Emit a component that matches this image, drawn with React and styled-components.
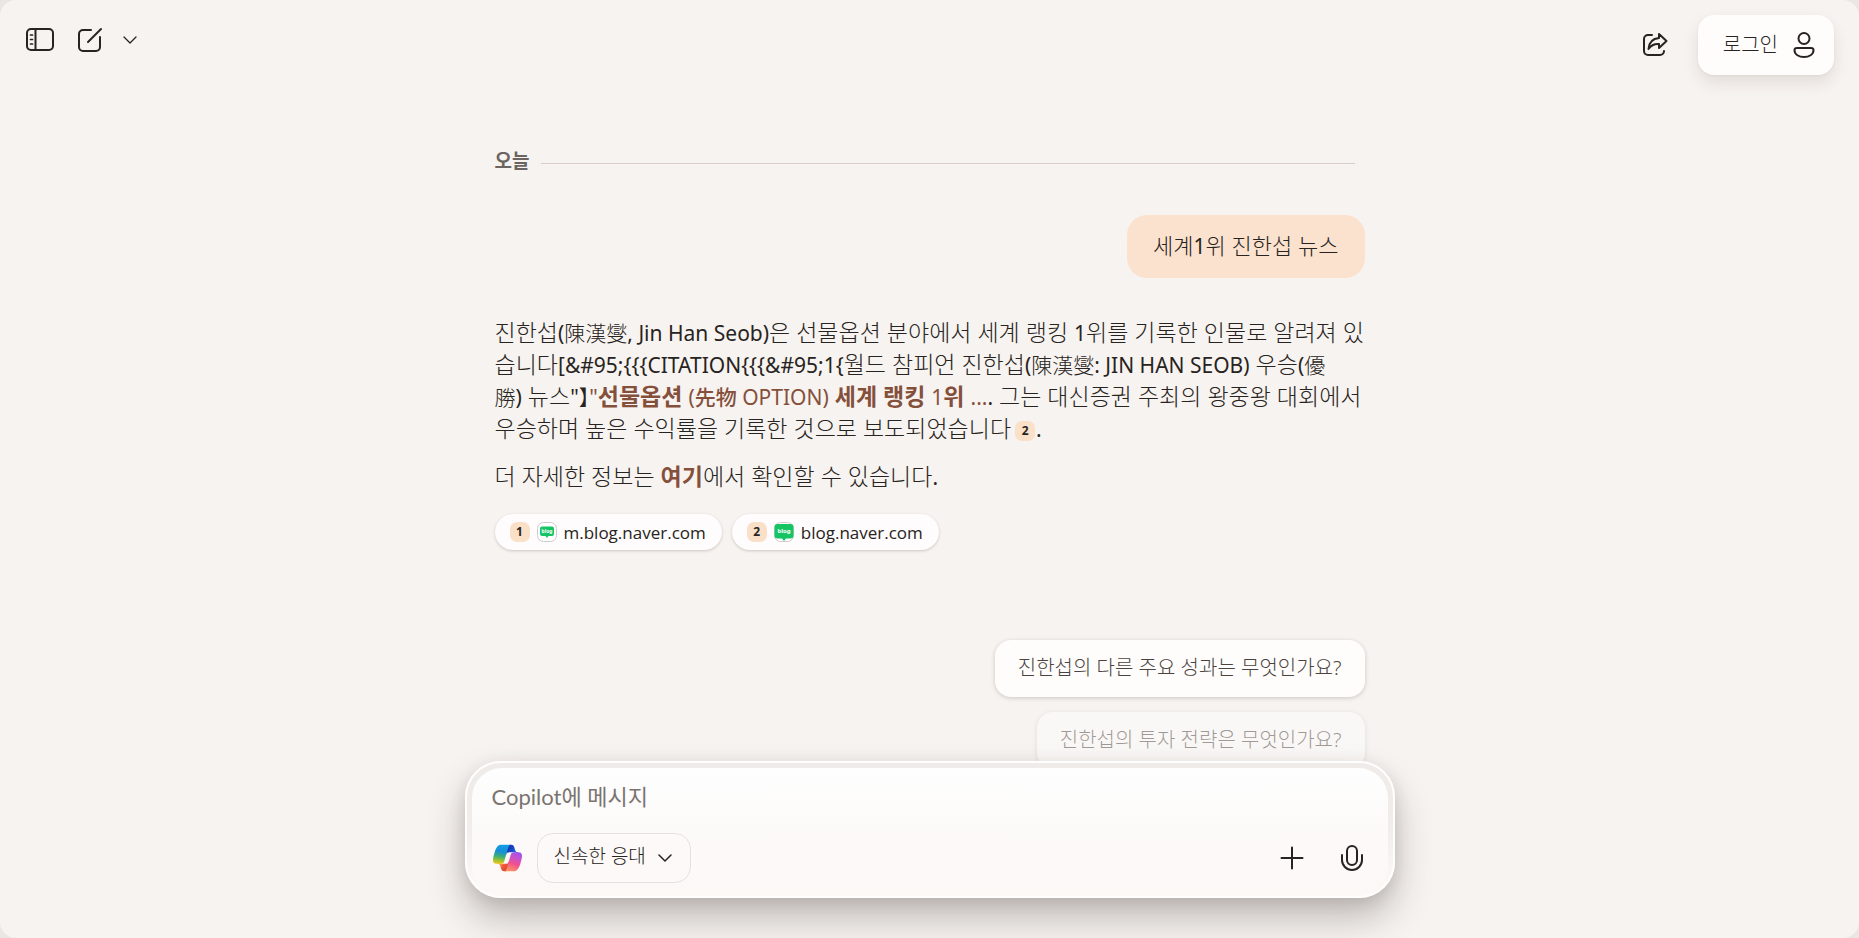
import React from "react";
import styled, { createGlobalStyle } from "styled-components";

const GlobalStyle = createGlobalStyle`
  * { box-sizing: border-box; }
  html { background: #e9e6e4; }
  body {
    margin: 0;
    font-family: "Noto Sans", "Noto Sans CJK KR", sans-serif;
    color: #272320;
  }
  button, input, select { font: inherit; color: inherit; }
`;

const Page = styled.div`
  display: flex;
  flex-direction: column;
  height: 100vh;
  overflow: hidden;
  border-radius: 16px;
  background: #f7f3f0;
`;

const Header = styled.header`
  display: flex;
  justify-content: space-between;
  align-items: flex-start;
  padding: 15px 25px 0 23px;
  height: 90px;
  flex: none;
`;

const Tools = styled.div`
  display: flex;
  align-items: center;
  gap: ${(p) => p.$gap}px;
  height: ${(p) => p.$height}px;
`;

const IconButton = styled.button`
  display: flex;
  align-items: center;
  justify-content: center;
  width: ${(p) => p.$width || 34}px;
  height: 32px;
  padding: 0;
  border: 0;
  background: none;
  cursor: pointer;
`;

const LoginButton = styled.button`
  display: flex;
  align-items: center;
  gap: 14px;
  height: 60px;
  padding: 0 18px 0 25px;
  border: 0;
  border-radius: 16px;
  background: #fefdfc;
  box-shadow: 0 8px 16px rgba(60, 40, 30, 0.1), 0 1px 3px rgba(60, 40, 30, 0.05);
  font-size: 20px;
  font-weight: 300;
  line-height: 28px;
  cursor: pointer;
`;

const Conversation = styled.main`
  flex: 1;
  min-height: 0;
  overflow: hidden;
  padding: 56px 24px 0;
`;

const Column = styled.div`
  display: flex;
  flex-direction: column;
  max-width: 870px;
  margin: 0 auto;
`;

const DayDivider = styled.div`
  display: flex;
  align-items: center;
  gap: 12px;
  height: 30px;
  padding-right: 10px;
  font-size: 19px;
  font-weight: 700;
  line-height: 28px;
  color: #6b6460;

  &::after {
    content: "";
    flex: 1;
    height: 1px;
    margin-top: 4px;
    background: #d8cdc7;
  }
`;

const UserMessage = styled.p`
  align-self: flex-end;
  margin: 39px 0 0;
  padding: 14px 26px 17px;
  border-radius: 20px;
  background: #fbe2ce;
  font-size: 22px;
  font-weight: 300;
  line-height: 32px;
`;

const Answer = styled.div`
  margin: 38px -16px 0 0;
  font-size: 23px;
  font-weight: 300;
  line-height: 32px;
`;

const Paragraph = styled.p`
  margin: 0 0 16px;
`;

const Latin = styled.span`
  font-size: 21px;
  font-weight: 400;
  line-height: 1;
`;

const Hanja = styled.span`
  font-size: 21px;
  line-height: 1;
  font-feature-settings: "halt";
`;

const AnswerLink = styled.a`
  color: #85503b;
  font-weight: 700;
  text-decoration: none;

  ${Hanja} { font-weight: 500; }
`;

const Badge = styled.span`
  display: inline-flex;
  align-items: center;
  justify-content: center;
  width: 20px;
  height: 20px;
  border-radius: 7px;
  background: #fbe0c8;
  color: #272320;
  font-size: 12px;
  font-weight: 700;
  line-height: 20px;
`;

const CitationLink = styled.a`
  display: inline-flex;
  margin: 0 1px 0 4px;
  vertical-align: middle;
  text-decoration: none;
`;

const Sources = styled.div`
  display: flex;
  gap: 10px;
  margin-top: 6px;
`;

const SourceLink = styled.a`
  display: flex;
  align-items: center;
  gap: 7px;
  height: 36px;
  padding: 0 16px 0 15px;
  border-radius: 18px;
  background: #fefcfc;
  box-shadow: 0 1px 3px rgba(60, 40, 30, 0.22);
  color: #272320;
  font-family: "Open Sans", sans-serif;
  font-size: 17px;
  text-decoration: none;
`;

const Suggestions = styled.div`
  display: flex;
  flex-direction: column;
  align-items: flex-end;
  gap: 15px;
  margin-top: 90px;
`;

const Suggestion = styled.button`
  height: 57px;
  padding: 0 23px 2px;
  border: 0;
  border-radius: 16px;
  background: #fefdfc;
  box-shadow: 0 1px 4px rgba(60, 40, 30, 0.22);
  font-size: 20px;
  font-weight: 300;
  line-height: 28px;
  color: #4a4340;
  opacity: ${(p) => (p.$faded ? 0.5 : 1)};
  cursor: pointer;
`;

const Footer = styled.footer`
  position: relative;
  flex: none;
  padding: 0 24px 40px;
`;

const Composer = styled.form`
  max-width: 930px;
  margin: 0 auto;
  padding: 5px 5px 0;
  border: 2px solid #fffefd;
  border-radius: 36px;
  background: linear-gradient(#efebe8, #f1edea 50%, #fcf8f6 90%);
  box-shadow: 0 20px 36px rgba(50, 40, 35, 0.28), 0 4px 16px rgba(50, 40, 35, 0.1);
`;

const ComposerBody = styled.div`
  display: flex;
  flex-direction: column;
  padding: 8px 19px 13px 20px;
  border-radius: 30px;
  background: linear-gradient(#fefefe, #fcfaf9 50%, #fcf8f6);
`;

const MessageInput = styled.input`
  width: 100%;
  height: 40px;
  padding: 0;
  border: 0;
  outline: 0;
  background: none;
  font-family: Lato, "Noto Sans CJK KR", sans-serif;
  font-size: 22px;
  font-weight: 400;

  &::placeholder { color: #7a7470; opacity: 1; }
`;

const ComposerRow = styled.div`
  display: flex;
  align-items: center;
  gap: 15px;
  margin-top: 17px;
  padding-left: 1px;
`;

const ModeField = styled.label`
  display: flex;
  align-items: center;
  height: 50px;
  padding-right: 18px;
  border: 1px solid #e6e1de;
  border-radius: 16px;
`;

const ModeSelect = styled.select`
  appearance: none;
  height: 48px;
  margin-right: -24px;
  padding: 0 35px 4px 16px;
  border: 0;
  outline: 0;
  background: none;
  font-size: 19px;
  font-weight: 300;
`;

const Actions = styled.div`
  display: flex;
  gap: 26px;
  margin-left: auto;
`;

const Stroke = ({ w, h, sw = 2, children }) => (
  <svg
    width={w}
    height={h}
    viewBox={`0 0 ${w} ${h}`}
    fill="none"
    stroke="#272320"
    strokeWidth={sw}
    strokeLinecap="round"
    strokeLinejoin="round"
    aria-hidden="true"
  >
    {children}
  </svg>
);

const SidebarIcon = () => (
  <Stroke w={30} h={26}>
    <rect x="2" y="2" width="26" height="21" rx="4" />
    <path d="M10.5 2v21" />
    <path d="M5.500 8h2M5.500 12.500h2M5.500 17h2" strokeWidth="1.700" />
  </Stroke>
);

const ComposeIcon = () => (
  <Stroke w={26} h={26}>
    <path d="M14 3H6a4 4 0 0 0-4 4v13a4 4 0 0 0 4 4h13a4 4 0 0 0 4-4V10" />
    <path d="M11 15 24 2" />
  </Stroke>
);

const ChevronIcon = ({ sw = 1.5 }) => (
  <Stroke w={14} h={10} sw={sw}>
    <path d="m1 2 6 6 6-6" />
  </Stroke>
);

const ShareIcon = () => (
  <Stroke w={28} h={26}>
    <path d="M11 3H7a4 4 0 0 0-4 4v12a4 4 0 0 0 4 4h12a4 4 0 0 0 4-4" />
    <path d="M18 2l7.500 7-7.500 7v-4c-5-.500-8 1.500-10.500 5C8 10.500 12 6.500 18 6z" />
  </Stroke>
);

const PersonIcon = () => (
  <Stroke w={24} h={28}>
    <circle cx="12" cy="7.500" r="5.500" />
    <path d="M5 17h14c1.500 0 2.500 1 2.500 2.300C21.500 23.500 17 26 12 26S2.500 23.500 2.500 19.300C2.500 18 3.500 17 5 17Z" />
  </Stroke>
);

const PlusIcon = () => (
  <Stroke w={24} h={24}>
    <path d="M12 1.500v21M1.500 12h21" />
  </Stroke>
);

const MicIcon = () => (
  <Stroke w={24} h={28}>
    <rect x="7" y="2" width="10" height="19" rx="5" />
    <path d="M2 11v5a10 10 0 0 0 20 0v-5" />
  </Stroke>
);

const CopilotLogo = () => (
  <svg width="29" height="28" viewBox="2 3 44 42" aria-hidden="true">
    <defs>
      <linearGradient id="flapTop" x1="38" y1="15" x2="24" y2="6" gradientUnits="userSpaceOnUse">
        <stop offset="0" stopColor="#1b72e8" />
        <stop offset="0.5" stopColor="#1843c8" />
        <stop offset="1" stopColor="#1736a8" />
      </linearGradient>
      <linearGradient id="flapBottom" x1="10" y1="33" x2="22" y2="43" gradientUnits="userSpaceOnUse">
        <stop offset="0" stopColor="#ffb657" />
        <stop offset="0.5" stopColor="#f0593a" />
        <stop offset="1" stopColor="#d9432f" />
      </linearGradient>
      <linearGradient id="ribbonLeft" x1="16" y1="4" x2="12" y2="33" gradientUnits="userSpaceOnUse">
        <stop offset="0" stopColor="#129ee8" />
        <stop offset="0.35" stopColor="#168fd6" />
        <stop offset="0.62" stopColor="#3fae72" />
        <stop offset="0.85" stopColor="#a8c42a" />
        <stop offset="1" stopColor="#efc51c" />
      </linearGradient>
      <linearGradient id="ribbonRight" x1="40" y1="14" x2="28" y2="45" gradientUnits="userSpaceOnUse">
        <stop offset="0" stopColor="#9a52f0" />
        <stop offset="0.3" stopColor="#c552d0" />
        <stop offset="0.6" stopColor="#f0508f" />
        <stop offset="1" stopColor="#ff9a60" />
      </linearGradient>
    </defs>
    <path
      fill="url(#flapTop)"
      d="M34.142 7.325A4.630 4.630 0 0 0 29.700 4h-1.350a4.630 4.630 0 0 0-4.554 3.794L21.480 20.407l.575-1.965a4.630 4.630 0 0 1 4.444-3.330h7.853l3.294 1.282 3.175-1.283h-.926a4.630 4.630 0 0 1-4.443-3.325z"
    />
    <path
      fill="url(#flapBottom)"
      d="M14.330 40.656A4.630 4.630 0 0 0 18.779 44h2.870a4.630 4.630 0 0 0 4.629-4.510l.312-12.163-.654 2.233a4.630 4.630 0 0 1-4.443 3.329h-7.919l-2.823-1.532-3.057 1.532h.912a4.630 4.630 0 0 1 4.447 3.344z"
    />
    <path
      fill="url(#ribbonLeft)"
      d="M29.500 4H13.460c-4.583 0-7.332 6.057-9.165 12.113C2.123 23.290-.720 32.885 7.503 32.885h6.926a4.630 4.630 0 0 0 4.456-3.358 2078 2078 0 0 1 4.971-17.156c.843-2.843 1.544-5.284 2.621-6.805C27.080 4.715 28.086 4 29.500 4"
    />
    <path
      fill="url(#ribbonRight)"
      d="M18.498 44h16.040c4.582 0 7.332-6.058 9.165-12.115 2.172-7.177 5.015-16.775-3.208-16.775h-6.926a4.630 4.630 0 0 0-4.456 3.358 2084 2084 0 0 1-4.972 17.160c-.842 2.842-1.544 5.283-2.620 6.805-.604.852-1.610 1.567-3.023 1.567"
    />
  </svg>
);

const BlogIcon = ({ large }) => (
  <svg width="20" height="20" viewBox="0 0 20 20" aria-hidden="true">
    <rect x="0.5" y="0.5" width="19" height="19" rx="6" fill="#fff" stroke="#cfcac7" />
    {large ? (
      <path d="M3.500 2h13a3 3 0 0 1 3 3v8.500a3 3 0 0 1-3 3H12l-2 2.500-2-2.500H3.500a3 3 0 0 1-3-3V5a3 3 0 0 1 3-3Z" fill="#16c464" />
    ) : (
      <path d="M5 4.500h10a2 2 0 0 1 2 2V12a2 2 0 0 1-2 2h-3.500L10 16l-1.500-2H5a2 2 0 0 1-2-2V6.500a2 2 0 0 1 2-2Z" fill="#16c464" />
    )}
    <text
      x="10"
      y="11"
      textAnchor="middle"
      fontFamily="Noto Sans, sans-serif"
      fontWeight="700"
      fontSize={large ? 6 : 5}
      fill="#fff"
    >
      blog
    </text>
  </svg>
);

export default function App() {
  return (
    <>
      <GlobalStyle />
      <Page>
        <Header>
          <Tools $gap={16} $height={50}>
            <IconButton type="button" aria-label="사이드바 열기"><SidebarIcon /></IconButton>
            <IconButton type="button" aria-label="새 채팅"><ComposeIcon /></IconButton>
            <IconButton type="button" $width={14} aria-label="더 보기"><ChevronIcon sw={1.3} /></IconButton>
          </Tools>
          <Tools $gap={26} $height={60}>
            <IconButton type="button" aria-label="공유"><ShareIcon /></IconButton>
            <LoginButton type="button">
              로그인
              <PersonIcon />
            </LoginButton>
          </Tools>
        </Header>

        <Conversation>
          <Column>
            <DayDivider>오늘</DayDivider>
            <UserMessage>세계<Latin>1</Latin>위 진한섭 뉴스</UserMessage>

            <Answer>
              <Paragraph>
                진한섭<Latin>(</Latin><Hanja>陳漢燮</Hanja><Latin>, Jin Han Seob)</Latin>은 선물옵션 분야에서 세계 랭킹{" "}
                <Latin>1</Latin>위를 기록한 인물로 알려져 있<br />
                습니다<Latin>[&amp;#95;{"{{{"}CITATION{"{{{"}&amp;#95;1{"{"}</Latin>월드 참피언 진한섭<Latin>(</Latin>
                <Hanja>陳漢燮</Hanja><Latin>: JIN HAN SEOB)</Latin> 우승<Latin>(</Latin><Hanja>優</Hanja><br />
                <Hanja>勝</Hanja><Latin>)</Latin> 뉴스<Latin>"</Latin><Hanja>】</Hanja>
                <AnswerLink href="#news">
                  <Latin>"</Latin>선물옵션 <Latin>(</Latin><Hanja>先物</Hanja><Latin> OPTION)</Latin> 세계 랭킹{" "}
                  <Latin>1</Latin>위 <Latin>...</Latin>
                </AnswerLink>
                <Latin>.</Latin> 그는 대신증권 주최의 왕중왕 대회에서<br />
                우승하며 높은 수익률을 기록한 것으로 보도되었습니다
                <CitationLink href="#source-2"><Badge>2</Badge></CitationLink><Latin>.</Latin>
              </Paragraph>
              <Paragraph>
                더 자세한 정보는 <AnswerLink href="#here">여기</AnswerLink>에서 확인할 수 있습니다<Latin>.</Latin>
              </Paragraph>
            </Answer>

            <Sources>
              <SourceLink href="#source-1">
                <Badge>1</Badge>
                <BlogIcon />
                m.blog.naver.com
              </SourceLink>
              <SourceLink href="#source-2">
                <Badge>2</Badge>
                <BlogIcon large />
                blog.naver.com
              </SourceLink>
            </Sources>

            <Suggestions>
              <Suggestion type="button">진한섭의 다른 주요 성과는 무엇인가요?</Suggestion>
              <Suggestion type="button" $faded>진한섭의 투자 전략은 무엇인가요?</Suggestion>
            </Suggestions>
          </Column>
        </Conversation>

        <Footer>
          <Composer onSubmit={(e) => e.preventDefault()}>
            <ComposerBody>
              <MessageInput type="text" placeholder="Copilot에 메시지" aria-label="Copilot에 메시지" />
              <ComposerRow>
                <CopilotLogo />
                <ModeField>
                  <ModeSelect aria-label="응답 모드" defaultValue="quick">
                    <option value="quick">신속한 응대</option>
                  </ModeSelect>
                  <ChevronIcon />
                </ModeField>
                <Actions>
                  <IconButton type="button" aria-label="추가"><PlusIcon /></IconButton>
                  <IconButton type="button" aria-label="음성으로 말하기"><MicIcon /></IconButton>
                </Actions>
              </ComposerRow>
            </ComposerBody>
          </Composer>
        </Footer>
      </Page>
    </>
  );
}
